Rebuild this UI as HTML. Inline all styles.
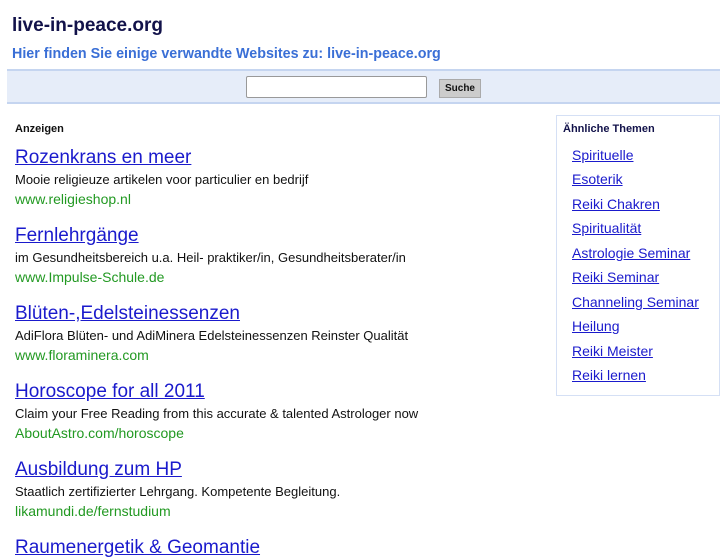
<!DOCTYPE html>
<html><head><meta charset="utf-8"><style>
body{margin:0;background:#fff;font-family:"Liberation Sans",Arial,sans-serif;width:727px;height:545px;overflow:hidden;position:relative}
.a{position:absolute;white-space:nowrap}
h1{position:absolute;left:12px;top:15px;margin:0;font-size:19px;color:#12124a;font-weight:bold}
.sub{left:12px;top:46px;font-size:14.3px;font-weight:bold;color:#3a6fd6}
.bar{position:absolute;left:7px;top:69px;width:713px;height:35px;background:#e6edf9;border-top:2px solid #c5d5f0;border-bottom:2px solid #c5d5f0;box-sizing:border-box}
.inp{position:absolute;left:246px;top:76px;width:181px;height:22px;border:1px solid #999;border-radius:2px;background:#fff;box-sizing:border-box}
.btn{position:absolute;left:439px;top:79px;width:42px;height:19px;background:#ccc;border:1px solid #aaa;box-sizing:border-box;font-size:10px;font-weight:bold;text-align:center;line-height:17px;color:#111}
.anz{left:15px;top:123px;font-size:11px;font-weight:bold;color:#111}
.t{left:15px;font-size:19px;color:#1a1acc;text-decoration:underline}
.d{left:15px;font-size:13px;color:#111}
.u{left:15px;font-size:14px;color:#229922}
.side{position:absolute;left:556px;top:115px;width:164px;height:281px;border:1px solid #d5e0f5;box-sizing:border-box}
.sh{left:563px;top:123px;font-size:11px;font-weight:bold;color:#12124a}
.l{left:572px;font-size:14px;color:#1a1acc;text-decoration:underline}
</style></head><body>
<h1>live-in-peace.org</h1>
<div class="a sub">Hier finden Sie einige verwandte Websites zu: live-in-peace.org</div>
<div class="bar"></div><div class="inp"></div><div class="btn">Suche</div>
<div class="a anz">Anzeigen</div>
<div class="a t" style="top:147px">Rozenkrans en meer</div>
<div class="a d" style="top:172px">Mooie religieuze artikelen voor particulier en bedrijf</div>
<div class="a u" style="top:191px">www.religieshop.nl</div>
<div class="a t" style="top:225px">Fernlehrgänge</div>
<div class="a d" style="top:250px">im Gesundheitsbereich u.a. Heil- praktiker/in, Gesundheitsberater/in</div>
<div class="a u" style="top:269px">www.Impulse-Schule.de</div>
<div class="a t" style="top:303px">Blüten-,Edelsteinessenzen</div>
<div class="a d" style="top:328px">AdiFlora Blüten- und AdiMinera Edelsteinessenzen Reinster Qualität</div>
<div class="a u" style="top:347px">www.floraminera.com</div>
<div class="a t" style="top:381px">Horoscope for all 2011</div>
<div class="a d" style="top:406px">Claim your Free Reading from this accurate &amp; talented Astrologer now</div>
<div class="a u" style="top:425px">AboutAstro.com/horoscope</div>
<div class="a t" style="top:459px">Ausbildung zum HP</div>
<div class="a d" style="top:484px">Staatlich zertifizierter Lehrgang. Kompetente Begleitung.</div>
<div class="a u" style="top:503px">likamundi.de/fernstudium</div>
<div class="a t" style="top:537px">Raumenergetik &amp; Geomantie</div>
<div class="side"></div>
<div class="a sh">Ähnliche Themen</div>
<div class="a l" style="top:147px">Spirituelle</div>
<div class="a l" style="top:171px">Esoterik</div>
<div class="a l" style="top:196px">Reiki Chakren</div>
<div class="a l" style="top:220px">Spiritualität</div>
<div class="a l" style="top:245px">Astrologie Seminar</div>
<div class="a l" style="top:269px">Reiki Seminar</div>
<div class="a l" style="top:294px">Channeling Seminar</div>
<div class="a l" style="top:318px">Heilung</div>
<div class="a l" style="top:343px">Reiki Meister</div>
<div class="a l" style="top:367px">Reiki lernen</div>
</body></html>
